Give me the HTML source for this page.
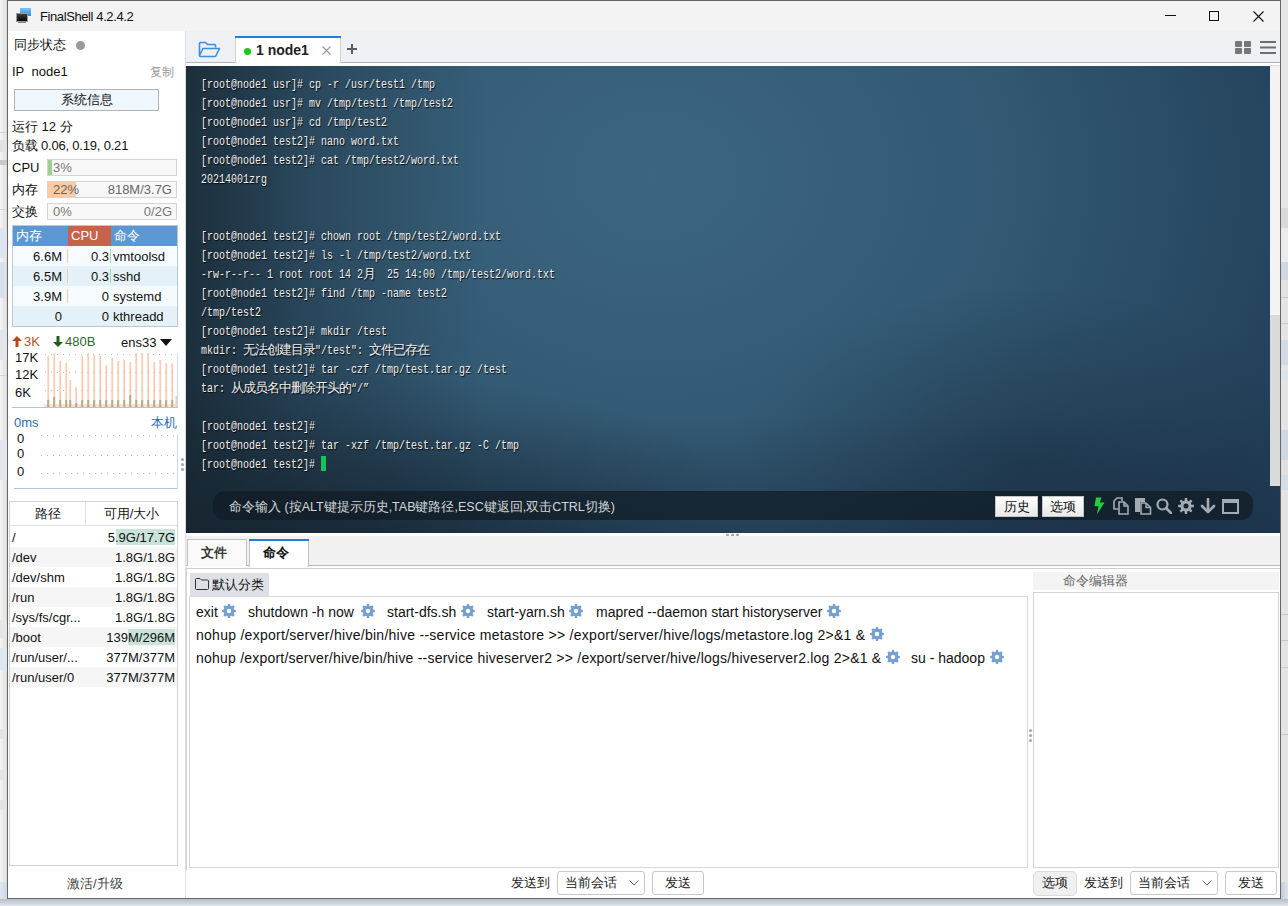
<!DOCTYPE html>
<html><head><meta charset="utf-8">
<style>
*{margin:0;padding:0;box-sizing:border-box}
html,body{width:1288px;height:906px;overflow:hidden;background:#f0f0f0;font-family:"Liberation Sans",sans-serif;font-size:13px;color:#222;position:relative}
.a{position:absolute;white-space:nowrap}
.t{position:absolute;white-space:nowrap;line-height:16px}
.tl{position:absolute;left:201px;font-family:"Liberation Mono",monospace;font-size:13px;transform:scaleX(0.7692);transform-origin:0 0;color:#f2f2f2;text-shadow:1px 1px 1px rgba(0,0,0,0.9);white-space:pre;line-height:18px}
.cj{display:inline-block;vertical-align:top;height:18px}
.cj i{display:inline-block;font-style:normal;font-size:12.5px;letter-spacing:-1px;transform:scaleX(1.3);transform-origin:0 0}
.bar{position:absolute;left:47px;width:130px;height:17px;border:1px solid #d4d4d4;background:#f8f8f8}
.pt{position:absolute;left:12px;width:166px;height:20px;font-size:13px;line-height:20px}
.dk{position:absolute;left:10px;width:168px;height:20px;font-size:13px;line-height:20px;color:#111}
.gear{position:absolute;width:14px;height:14px}
.btn{position:absolute;border:1px solid #c8c8c8;border-radius:3px;background:#fff;text-align:center;font-size:13px;line-height:21px;color:#222}
</style></head><body>
<!-- background strips -->
<div class="a" style="left:0;top:0;width:7px;height:906px;background:linear-gradient(90deg,#f4f4f4,#e8e8e8 60%,#dcdcdc)"></div>
<div class="a" style="left:0;top:132px;width:7px;height:1px;background:#d4d4d4"></div>
<div class="a" style="left:0;top:140px;width:7px;height:12px;background:#e2e2e2"></div>
<div class="a" style="left:0;top:160px;width:7px;height:5px;background:#c9c9c9"></div>
<div class="a" style="left:0;top:209px;width:7px;height:1px;background:#d4d4d4"></div>
<div class="a" style="left:0;top:228px;width:7px;height:30px;background:#dfe5ee"></div>
<div class="a" style="left:0;top:262px;width:7px;height:36px;background:#d8e0ea"></div>
<div class="a" style="left:0;top:330px;width:7px;height:30px;background:#e2e6ec"></div>
<div class="a" style="left:0;top:375px;width:7px;height:1px;background:#d4d4d4"></div>
<div class="a" style="left:0;top:440px;width:7px;height:40px;background:#e3e7ed"></div>
<div class="a" style="left:0;top:620px;width:7px;height:18px;background:#e6e6e6"></div>
<div class="a" style="left:0;top:648px;width:7px;height:22px;background:#e0e6ee"></div>
<div class="a" style="left:0;top:729px;width:7px;height:10px;background:#e4e4e4"></div>
<div class="a" style="left:0;top:770px;width:7px;height:10px;background:#e4e4e4"></div>
<div class="a" style="left:0;top:800px;width:7px;height:10px;background:#e4e4e4"></div>
<div class="a" style="left:0;top:882px;width:7px;height:24px;background:linear-gradient(90deg,#dfe6ee,#cfd7e1)"></div>
<div class="a" style="left:0;top:899px;width:1288px;height:7px;background:linear-gradient(180deg,#b6bec9,#ccd4de 60%,#e6e9ed)"></div>
<div class="a" style="left:1281px;top:0;width:7px;height:898px;background:#e4e4e4"></div>
<div class="a" style="left:1281px;top:0px;width:7px;height:208px;background:#e6e6e6"></div>
<div class="a" style="left:1281px;top:208px;width:7px;height:20px;background:#d9d9d9"></div>
<div class="a" style="left:1281px;top:228px;width:7px;height:34px;background:#ebebeb"></div>
<div class="a" style="left:1281px;top:262px;width:7px;height:18px;background:#cfd7e2"></div>
<div class="a" style="left:1281px;top:280px;width:7px;height:17px;background:#e2e2e2"></div>
<div class="a" style="left:1281px;top:297px;width:7px;height:1px;background:#c8c8c8"></div>
<div class="a" style="left:1281px;top:323px;width:7px;height:1px;background:#c8c8c8"></div>
<div class="a" style="left:1281px;top:340px;width:7px;height:25px;background:#d2dae5"></div>
<div class="a" style="left:1281px;top:370px;width:7px;height:10px;background:#dde3ea"></div>
<div class="a" style="left:1281px;top:430px;width:7px;height:30px;background:#cfd7e2"></div>
<div class="a" style="left:1281px;top:460px;width:7px;height:15px;background:#e0e0e0"></div>
<div class="a" style="left:1281px;top:475px;width:7px;height:15px;background:#d4dce6"></div>
<div class="a" style="left:1281px;top:614px;width:7px;height:1px;background:#c8c8c8"></div>
<div class="a" style="left:1281px;top:640px;width:7px;height:1px;background:#c8c8c8"></div>
<div class="a" style="left:1281px;top:667px;width:7px;height:1px;background:#c8c8c8"></div>
<div class="a" style="left:1281px;top:734px;width:7px;height:1px;background:#c8c8c8"></div>
<div class="a" style="left:1281px;top:800px;width:7px;height:82px;background:#e4e4e4"></div><div class="a" style="left:1281px;top:882px;width:7px;height:17px;background:linear-gradient(90deg,#c4ccd6,#dde3ea)"></div>

<!-- window -->
<div class="a" style="left:7px;top:0;width:1274px;height:899px;border:1px solid #666;background:#fff"></div>
<div class="a" style="left:8px;top:1px;width:1272px;height:30px;background:#f3f3f3"></div>
<svg class="a" style="left:16px;top:7px" width="17" height="17" viewBox="0 0 17 17">
 <defs><linearGradient id="gb" x1="0" y1="0" x2="0" y2="1"><stop offset="0" stop-color="#7cc4f6"/><stop offset="1" stop-color="#2f8be0"/></linearGradient>
 <linearGradient id="gk" x1="0" y1="0" x2="0" y2="1"><stop offset="0" stop-color="#444"/><stop offset="1" stop-color="#000"/></linearGradient></defs>
 <rect x="4" y="1" width="11" height="8" fill="url(#gb)"/>
 <rect x="0.5" y="6.5" width="11" height="8" fill="url(#gk)" stroke="#999" stroke-width="1"/>
 <rect x="2" y="15" width="8" height="1" fill="#888"/>
</svg>
<div class="t" style="left:40px;top:9px;font-size:13px;letter-spacing:-0.4px;color:#111">FinalShell 4.2.4.2</div>
<div class="a" style="left:1165px;top:15px;width:11px;height:1px;background:#111"></div>
<div class="a" style="left:1209px;top:11px;width:10px;height:10px;border:1px solid #111"></div>
<svg class="a" style="left:1253px;top:11px" width="11" height="11" viewBox="0 0 11 11"><path d="M0.5 0.5L10.5 10.5M10.5 0.5L0.5 10.5" stroke="#111" stroke-width="1.1"/></svg>

<!-- LEFT PANEL -->
<div class="a" style="left:185px;top:31px;width:1px;height:867px;background:#dcdcdc"></div>
<div class="t" style="left:14px;top:37px;font-size:13px;color:#111">同步状态</div>
<div class="a" style="left:76px;top:41px;width:9px;height:9px;border-radius:50%;background:#999"></div>
<div class="t" style="left:12px;top:64px;font-size:13px;color:#111">IP&nbsp; node1</div>
<div class="t" style="left:150px;top:64px;font-size:12px;color:#999">复制</div>
<div class="a" style="left:14px;top:89px;width:145px;height:22px;border:1px solid #b4b4b4;background:#eef7fd;text-align:center;font-size:13px;line-height:20px;color:#111">系统信息</div>
<div class="t" style="left:12px;top:119px;color:#111">运行 12 分</div>
<div class="t" style="left:12px;top:138px;color:#111;letter-spacing:-0.2px">负载 0.06, 0.19, 0.21</div>

<div class="t" style="left:12px;top:160px;color:#111">CPU</div>
<div class="bar" style="top:159px"><div class="a" style="left:0;top:0;width:4px;height:15px;background:#9ccf90"></div><div class="t" style="left:5px;top:0;color:#777">3%</div></div>
<div class="t" style="left:12px;top:182px;color:#111">内存</div>
<div class="bar" style="top:181px"><div class="a" style="left:0;top:0;width:28px;height:15px;background:#fccba3"></div><div class="t" style="left:5px;top:0;color:#666">22%</div><div class="t" style="right:4px;top:0;color:#666">818M/3.7G</div></div>
<div class="t" style="left:12px;top:204px;color:#111">交换</div>
<div class="bar" style="top:203px"><div class="t" style="left:5px;top:0;color:#777">0%</div><div class="t" style="right:4px;top:0;color:#777">0/2G</div></div>

<!-- process table -->
<div class="a" style="left:12px;top:225px;width:166px;height:102px;border:1px solid #b8c8d8;background:#f5fbff"></div>
<div class="a" style="left:13px;top:226px;width:164px;height:20px;background:#5c97d3"></div>
<div class="a" style="left:68px;top:226px;width:43px;height:20px;background:#c6634d"></div>
<div class="t" style="left:16px;top:228px;color:#fff">内存</div>
<div class="t" style="left:71px;top:228px;color:#fff">CPU</div>
<div class="t" style="left:114px;top:228px;color:#fff">命令</div>
<div class="a" style="left:13px;top:266px;width:164px;height:20px;background:#e5f1f9"></div>
<div class="a" style="left:13px;top:306px;width:164px;height:20px;background:#e5f1f9"></div>
<div class="a" style="left:67px;top:249px;width:1px;height:14px;background:#f7c9a5"></div>
<div class="a" style="left:67px;top:269px;width:1px;height:14px;background:#f7c9a5"></div>
<div class="a" style="left:67px;top:289px;width:1px;height:14px;background:#f7c9a5"></div>
<div class="a" style="left:110px;top:249px;width:1px;height:14px;background:#a8d8a0"></div>
<div class="a" style="left:110px;top:269px;width:1px;height:14px;background:#a8d8a0"></div>
<div class="t" style="left:12px;width:50px;text-align:right;top:249px;color:#111">6.6M</div>
<div class="t" style="left:60px;width:49px;text-align:right;top:249px;color:#111">0.3</div>
<div class="t" style="left:113px;top:249px;color:#111">vmtoolsd</div>
<div class="t" style="left:12px;width:50px;text-align:right;top:269px;color:#111">6.5M</div>
<div class="t" style="left:60px;width:49px;text-align:right;top:269px;color:#111">0.3</div>
<div class="t" style="left:113px;top:269px;color:#111">sshd</div>
<div class="t" style="left:12px;width:50px;text-align:right;top:289px;color:#111">3.9M</div>
<div class="t" style="left:60px;width:49px;text-align:right;top:289px;color:#111">0</div>
<div class="t" style="left:113px;top:289px;color:#111">systemd</div>
<div class="t" style="left:12px;width:50px;text-align:right;top:309px;color:#111">0</div>
<div class="t" style="left:60px;width:49px;text-align:right;top:309px;color:#111">0</div>
<div class="t" style="left:113px;top:309px;color:#111">kthreadd</div>

<!-- network -->
<svg class="a" style="left:12px;top:336px" width="10" height="11" viewBox="0 0 10 11"><path d="M5 0L10 5H6.5V11H3.5V5H0Z" fill="#b34a18"/></svg>
<div class="t" style="left:24px;top:334px;color:#b5521f">3K</div>
<svg class="a" style="left:53px;top:336px" width="10" height="11" viewBox="0 0 10 11"><path d="M5 11L10 6H6.5V0H3.5V6H0Z" fill="#1d5e1d"/></svg>
<div class="t" style="left:65px;top:334px;color:#2a6a2a">480B</div>
<div class="t" style="left:121px;top:335px;color:#111">ens33</div>
<svg class="a" style="left:160px;top:339px" width="12" height="7" viewBox="0 0 12 7"><path d="M0 0H12L6 7Z" fill="#111"/></svg>
<svg class="a" style="left:0;top:0" width="186" height="500">
 <line x1="45" y1="354.5" x2="177" y2="354.5" stroke="#bbb" stroke-width="1" stroke-dasharray="1 5"/>
 <line x1="45" y1="372.5" x2="177" y2="372.5" stroke="#bbb" stroke-width="1" stroke-dasharray="1 5"/>
 <line x1="45" y1="390.5" x2="177" y2="390.5" stroke="#bbb" stroke-width="1" stroke-dasharray="1 5"/>
 <rect x="44" y="404" width="134" height="3" fill="#fde0d2"/><rect x="47.4" y="356" width="1.7" height="51" fill="#fdc9b1"/><rect x="47.2" y="400" width="2" height="7" fill="#b8ab86"/><rect x="53.4" y="353" width="1.7" height="54" fill="#fdc9b1"/><rect x="53.2" y="397" width="2" height="10" fill="#b8ab86"/><rect x="59.4" y="361" width="1.7" height="46" fill="#fdc9b1"/><rect x="59.2" y="400" width="2" height="7" fill="#b8ab86"/><rect x="65.4" y="363" width="1.7" height="44" fill="#fdc9b1"/><rect x="65.2" y="400" width="2" height="7" fill="#b8ab86"/><rect x="69.4" y="380" width="1.7" height="27" fill="#fdc9b1"/><rect x="69.2" y="400" width="2" height="7" fill="#b8ab86"/><rect x="75.4" y="387" width="1.7" height="20" fill="#fdc9b1"/><rect x="75.2" y="403" width="2" height="4" fill="#b8ab86"/><rect x="81.4" y="356" width="1.7" height="51" fill="#fdc9b1"/><rect x="81.2" y="400" width="2" height="7" fill="#b8ab86"/><rect x="87.4" y="353" width="1.7" height="54" fill="#fdc9b1"/><rect x="87.2" y="400" width="2" height="7" fill="#b8ab86"/><rect x="93.4" y="355" width="1.7" height="52" fill="#fdc9b1"/><rect x="93.2" y="400" width="2" height="7" fill="#b8ab86"/><rect x="99.4" y="356" width="1.7" height="51" fill="#fdc9b1"/><rect x="99.2" y="400" width="2" height="7" fill="#b8ab86"/><rect x="105.4" y="365" width="1.7" height="42" fill="#fdc9b1"/><rect x="105.2" y="400" width="2" height="7" fill="#b8ab86"/><rect x="111.4" y="358" width="1.7" height="49" fill="#fdc9b1"/><rect x="111.2" y="400" width="2" height="7" fill="#b8ab86"/><rect x="117.4" y="361" width="1.7" height="46" fill="#fdc9b1"/><rect x="117.2" y="400" width="2" height="7" fill="#b8ab86"/><rect x="123.4" y="360" width="1.7" height="47" fill="#fdc9b1"/><rect x="123.2" y="400" width="2" height="7" fill="#b8ab86"/><rect x="129.4" y="362" width="1.7" height="45" fill="#fdc9b1"/><rect x="129.2" y="395" width="2" height="12" fill="#b8ab86"/><rect x="135.4" y="353" width="1.7" height="54" fill="#fdc9b1"/><rect x="135.2" y="400" width="2" height="7" fill="#b8ab86"/><rect x="141.4" y="353" width="1.7" height="54" fill="#fdc9b1"/><rect x="141.2" y="400" width="2" height="7" fill="#b8ab86"/><rect x="147.4" y="353" width="1.7" height="54" fill="#fdc9b1"/><rect x="147.2" y="400" width="2" height="7" fill="#b8ab86"/><rect x="153.4" y="362" width="1.7" height="45" fill="#fdc9b1"/><rect x="153.2" y="400" width="2" height="7" fill="#b8ab86"/><rect x="159.4" y="360" width="1.7" height="47" fill="#fdc9b1"/><rect x="159.2" y="400" width="2" height="7" fill="#b8ab86"/><rect x="165.4" y="363" width="1.7" height="44" fill="#fdc9b1"/><rect x="165.2" y="400" width="2" height="7" fill="#b8ab86"/><rect x="171.4" y="363" width="1.7" height="44" fill="#fdc9b1"/><rect x="171.2" y="400" width="2" height="7" fill="#b8ab86"/><rect x="175.4" y="396" width="1.7" height="11" fill="#fdc9b1"/>
 <line x1="12" y1="407.5" x2="178" y2="407.5" stroke="#a9c6dc" stroke-width="1"/>
 <line x1="177.5" y1="353" x2="177.5" y2="408" stroke="#c9dbe8" stroke-width="1"/>
 <line x1="41" y1="435.5" x2="176" y2="435.5" stroke="#bbb" stroke-width="1" stroke-dasharray="1 5"/>
 <line x1="41" y1="455.5" x2="176" y2="455.5" stroke="#bbb" stroke-width="1" stroke-dasharray="1 5"/>
 <line x1="41" y1="473.5" x2="176" y2="473.5" stroke="#bbb" stroke-width="1" stroke-dasharray="1 5"/>
 <line x1="14" y1="488.5" x2="178" y2="488.5" stroke="#a9c6dc" stroke-width="1"/>
 <line x1="177.5" y1="434" x2="177.5" y2="489" stroke="#c9dbe8" stroke-width="1"/>
 <circle cx="182.5" cy="459.5" r="1.6" fill="#aaa"/><circle cx="182.5" cy="464.5" r="1.6" fill="#aaa"/><circle cx="182.5" cy="469.5" r="1.6" fill="#aaa"/>
</svg>
<div class="t" style="left:15px;top:350px;color:#111">17K</div>
<div class="t" style="left:15px;top:367px;color:#111">12K</div>
<div class="t" style="left:15px;top:385px;color:#111">6K</div>
<div class="t" style="left:14px;top:415px;color:#2b6cb4">0ms</div>
<div class="t" style="left:151px;top:415px;color:#2b6cb4">本机</div>
<div class="t" style="left:17px;top:431px;color:#111">0</div>
<div class="t" style="left:17px;top:446px;color:#111">0</div>
<div class="t" style="left:17px;top:464px;color:#111">0</div>

<!-- disk table -->
<div class="a" style="left:9px;top:501px;width:169px;height:365px;border:1px solid #d2d2d2;background:#fff"></div>
<div class="a" style="left:10px;top:525px;width:167px;height:1px;background:#e2e2e2"></div>
<div class="a" style="left:85px;top:502px;width:1px;height:23px;background:#e2e2e2"></div>
<div class="t" style="left:10px;width:75px;text-align:center;top:506px;color:#111">路径</div>
<div class="t" style="left:86px;width:91px;text-align:center;top:506px;color:#111">可用/大小</div>
<div class="a" style="left:10px;top:547px;width:167px;height:20px;background:#f6f6f6"></div>
<div class="a" style="left:10px;top:587px;width:167px;height:20px;background:#f6f6f6"></div>
<div class="a" style="left:10px;top:627px;width:167px;height:20px;background:#f6f6f6"></div>
<div class="a" style="left:10px;top:667px;width:167px;height:20px;background:#f6f6f6"></div>
<div class="a" style="left:116px;top:529px;width:59px;height:16px;background:#c9e3da"></div>
<div class="a" style="left:128px;top:629px;width:47px;height:16px;background:#c9e3da"></div>
<div class="t" style="left:12px;top:530px;color:#111">/</div><div class="t" style="left:90px;width:85px;text-align:right;top:530px;color:#111">5.9G/17.7G</div>
<div class="t" style="left:12px;top:550px;color:#111">/dev</div><div class="t" style="left:90px;width:85px;text-align:right;top:550px;color:#111">1.8G/1.8G</div>
<div class="t" style="left:12px;top:570px;color:#111">/dev/shm</div><div class="t" style="left:90px;width:85px;text-align:right;top:570px;color:#111">1.8G/1.8G</div>
<div class="t" style="left:12px;top:590px;color:#111">/run</div><div class="t" style="left:90px;width:85px;text-align:right;top:590px;color:#111">1.8G/1.8G</div>
<div class="t" style="left:12px;top:610px;color:#111">/sys/fs/cgr...</div><div class="t" style="left:90px;width:85px;text-align:right;top:610px;color:#111">1.8G/1.8G</div>
<div class="t" style="left:12px;top:630px;color:#111">/boot</div><div class="t" style="left:90px;width:85px;text-align:right;top:630px;color:#111">139M/296M</div>
<div class="t" style="left:12px;top:650px;color:#111">/run/user/...</div><div class="t" style="left:90px;width:85px;text-align:right;top:650px;color:#111">377M/377M</div>
<div class="t" style="left:12px;top:670px;color:#111">/run/user/0</div><div class="t" style="left:90px;width:85px;text-align:right;top:670px;color:#111">377M/377M</div>

<div class="t" style="left:67px;top:876px;color:#444">激活/升级</div>

<!-- RIGHT: tab bar -->
<div class="a" style="left:186px;top:31px;width:1094px;height:31px;background:#eef0f4"></div>
<div class="a" style="left:186px;top:62px;width:1094px;height:1px;background:#b4b4b4"></div>
<div class="a" style="left:186px;top:63px;width:1094px;height:3px;background:#fff"></div>
<svg class="a" style="left:198px;top:41px" width="23" height="17" viewBox="0 0 23 17">
 <path d="M1.5 14.5V2.5Q1.5 1.5 2.5 1.5H7.5L9.5 3.5H16.5Q17.5 3.5 17.5 4.5V6.5" fill="none" stroke="#3b8ee0" stroke-width="1.6"/>
 <path d="M1.5 14.5L5 7.5H21.5L18 14.5Q17.6 15.5 16.5 15.5H2.5Q1.5 15.5 1.5 14.5Z" fill="none" stroke="#3b8ee0" stroke-width="1.6" stroke-linejoin="round"/>
</svg>
<div class="a" style="left:235px;top:36px;width:106px;height:27px;background:#fff;border-left:1px solid #d0d0d0;border-right:1px solid #d0d0d0"></div>
<div class="a" style="left:235px;top:36px;width:106px;height:2px;background:#1d7ee0"></div>
<div class="a" style="left:244px;top:48px;width:7px;height:7px;border-radius:50%;background:#1fc41f"></div>
<div class="t" style="left:256px;top:42px;font-size:14px;font-weight:bold;color:#222">1 node1</div>
<svg class="a" style="left:322px;top:46px" width="9" height="9" viewBox="0 0 9 9"><path d="M0.5 0.5L8.5 8.5M8.5 0.5L0.5 8.5" stroke="#999" stroke-width="1.1"/></svg>
<svg class="a" style="left:346px;top:43px" width="12" height="12" viewBox="0 0 12 12"><path d="M6 1V11M1 6H11" stroke="#5c5c5c" stroke-width="2"/></svg>
<svg class="a" style="left:1235px;top:41px" width="16" height="13" viewBox="0 0 16 13">
 <rect x="0" y="0" width="7" height="6" rx="1" fill="#777"/><rect x="9" y="0" width="7" height="6" rx="1" fill="#777"/>
 <rect x="0" y="7" width="7" height="6" rx="1" fill="#777"/><rect x="9" y="7" width="7" height="6" rx="1" fill="#777"/>
</svg>
<svg class="a" style="left:1260px;top:41px" width="16" height="13" viewBox="0 0 16 13">
 <rect x="0" y="0" width="16" height="2" fill="#6d6d6d"/><rect x="0" y="5.5" width="16" height="2" fill="#6d6d6d"/><rect x="0" y="11" width="16" height="2" fill="#6d6d6d"/>
</svg>

<!-- terminal -->
<div class="a" style="left:186px;top:66px;width:1094px;height:467px;overflow:hidden;
 background:
  linear-gradient(90deg, rgba(22,34,42,0.7) 0px, rgba(22,34,42,0.3) 120px, rgba(22,34,42,0) 300px),
  radial-gradient(ellipse 450px 160px at 150px 467px, rgba(18,30,40,0.55), rgba(18,30,40,0) 100%),
  radial-gradient(ellipse 300px 180px at 840px 400px, rgba(16,30,46,0.35), rgba(16,30,46,0) 100%),
  linear-gradient(180deg, rgba(18,32,46,0) 75%, rgba(18,32,46,0.3) 100%),
  radial-gradient(ellipse 680px 540px at 470px 110px, rgba(62,106,132,0.9) 0%, rgba(62,106,132,0.6) 50%, rgba(62,106,132,0) 100%),
  #23405a;"></div>
<div class="a" style="left:1270px;top:65px;width:10px;height:1px;background:#ddd"></div><div class="a" style="left:1270px;top:66px;width:10px;height:420px;background:#f3f3f3"></div>
<div class="a" style="left:1270px;top:315px;width:10px;height:171px;background:#dadada"></div>
<div class="tl" style="top:76px">[root@node1 usr]# cp -r /usr/test1 /tmp</div>
<div class="tl" style="top:95px">[root@node1 usr]# mv /tmp/test1 /tmp/test2</div>
<div class="tl" style="top:114px">[root@node1 usr]# cd /tmp/test2</div>
<div class="tl" style="top:133px">[root@node1 test2]# nano word.txt</div>
<div class="tl" style="top:152px">[root@node1 test2]# cat /tmp/test2/word.txt</div>
<div class="tl" style="top:171px">20214001zrg</div>
<div class="tl" style="top:228px">[root@node1 test2]# chown root /tmp/test2/word.txt</div>
<div class="tl" style="top:247px">[root@node1 test2]# ls -l /tmp/test2/word.txt</div>
<div class="tl" style="top:266px">-rw-r--r-- 1 root root 14 2<span class=cj style="width:15.6px"><i>月</i></span>  25 14:00 /tmp/test2/word.txt</div>
<div class="tl" style="top:285px">[root@node1 test2]# find /tmp -name test2</div>
<div class="tl" style="top:304px">/tmp/test2</div>
<div class="tl" style="top:323px">[root@node1 test2]# mkdir /test</div>
<div class="tl" style="top:342px">mkdir: <span class=cj style="width:93.6px"><i>无法创建目录</i></span>"/test": <span class=cj style="width:78.0px"><i>文件已存在</i></span></div>
<div class="tl" style="top:361px">[root@node1 test2]# tar -czf /tmp/test.tar.gz /test</div>
<div class="tl" style="top:380px">tar: <span class=cj style="width:156.0px"><i>从成员名中删除开头的</i></span>“/”</div>
<div class="tl" style="top:418px">[root@node1 test2]#</div>
<div class="tl" style="top:437px">[root@node1 test2]# tar -xzf /tmp/test.tar.gz -C /tmp</div>
<div class="tl" style="top:456px">[root@node1 test2]# </div>

<div class="a" style="left:321px;top:456px;width:5px;height:15px;background:#17c25a"></div>

<!-- command input bar -->
<div class="a" style="left:213px;top:491px;width:1040px;height:29px;border-radius:12px;background:rgba(16,28,38,0.72)"></div>
<div class="t" style="left:229px;top:499px;font-size:12.5px;color:#d3d7da">命令输入 (按ALT键提示历史,TAB键路径,ESC键返回,双击CTRL切换)</div>
<div class="a" style="left:995px;top:496px;width:43px;height:21px;background:linear-gradient(#fff,#e9e9e9);border:1px solid #c4c4c4;text-align:center;line-height:19px;color:#111">历史</div>
<div class="a" style="left:1042px;top:496px;width:42px;height:21px;background:linear-gradient(#fff,#e9e9e9);border:1px solid #c4c4c4;text-align:center;line-height:19px;color:#111">选项</div>
<svg class="a" style="left:1094px;top:497px" width="12" height="18" viewBox="0 0 12 18"><path d="M2 0.5H7.5L5.8 5.5H10.5L2.8 17.5L4.6 9.2H0.5Z" fill="#22d13a"/></svg>
<svg class="a" style="left:1112px;top:497px" width="18" height="18" viewBox="0 0 18 18" fill="none" stroke="#a3acb4" stroke-width="1.6"><path d="M6 12H2V4L5 1H10V4"/><path d="M7 5H12L16 9V17H7Z"/><path d="M12 5V9H16"/></svg>
<svg class="a" style="left:1134px;top:497px" width="18" height="18" viewBox="0 0 18 18"><path d="M1 1H11V5H6V15H1Z" fill="#a3acb4"/><path d="M7 6H12L16.5 10.5V17H7Z" fill="none" stroke="#a3acb4" stroke-width="1.6"/><path d="M12 6V10.5H16.5" fill="none" stroke="#a3acb4" stroke-width="1.4"/></svg>
<svg class="a" style="left:1156px;top:498px" width="16" height="16" viewBox="0 0 16 16"><circle cx="6.5" cy="6.5" r="5" fill="none" stroke="#a3acb4" stroke-width="2.2"/><path d="M10 10L15 15" stroke="#a3acb4" stroke-width="2.6" stroke-linecap="round"/></svg>
<svg class="a" style="left:1178px;top:498px" width="16" height="16" viewBox="0 0 14 14"><path fill="#a3acb4" fill-rule="evenodd" d="M11.76 5.85 L13.92 5.95 L13.92 8.05 L11.76 8.15 L11.18 9.55 L12.64 11.15 L11.15 12.64 L9.55 11.18 L8.15 11.76 L8.05 13.92 L5.95 13.92 L5.85 11.76 L4.45 11.18 L2.85 12.64 L1.36 11.15 L2.82 9.55 L2.24 8.15 L0.08 8.05 L0.08 5.95 L2.24 5.85 L2.82 4.45 L1.36 2.85 L2.85 1.36 L4.45 2.82 L5.85 2.24 L5.95 0.08 L8.05 0.08 L8.15 2.24 L9.55 2.82 L11.15 1.36 L12.64 2.85 L11.18 4.45Z M9.2 7 A2.2 2.2 0 1 0 4.8 7 A2.2 2.2 0 1 0 9.2 7Z"/></svg>
<svg class="a" style="left:1200px;top:498px" width="16" height="16" viewBox="0 0 16 16"><path d="M8 1V14M2 8L8 14L14 8" fill="none" stroke="#a3acb4" stroke-width="2.6" stroke-linecap="round" stroke-linejoin="round"/></svg>
<svg class="a" style="left:1222px;top:499px" width="17" height="15" viewBox="0 0 17 15"><rect x="1" y="1" width="15" height="13" fill="none" stroke="#a3acb4" stroke-width="2"/><rect x="1" y="1" width="15" height="3" fill="#a3acb4"/></svg>


<!-- splitter -->
<div class="a" style="left:186px;top:533px;width:1094px;height:3px;background:#fff"></div>
<svg class="a" style="left:725px;top:533px" width="15" height="4"><circle cx="2.5" cy="2" r="1.6" fill="#aaa"/><circle cx="7.5" cy="2" r="1.6" fill="#aaa"/><circle cx="12.5" cy="2" r="1.6" fill="#aaa"/></svg>
<div class="a" style="left:186px;top:536px;width:1094px;height:29px;background:#f1f1f1"></div>
<div class="a" style="left:186px;top:565px;width:1094px;height:1px;background:#b8b8b8"></div>
<div class="a" style="left:186px;top:566px;width:1094px;height:2px;background:#fff"></div>
<div class="a" style="left:186px;top:568px;width:1094px;height:1px;background:#cfcfcf"></div>
<div class="a" style="left:187px;top:539px;width:60px;height:27px;background:#fafafa;border:1px solid #c0c0c0;border-bottom:none"></div>
<div class="t" style="left:201px;top:545px;font-size:13px;font-weight:bold;color:#3a3a3a">文件</div>
<div class="a" style="left:249px;top:539px;width:60px;height:28px;background:#fff;border-left:1px solid #c0c0c0;border-right:1px solid #c0c0c0"></div>
<div class="a" style="left:249px;top:539px;width:60px;height:2px;background:#1d7ee0"></div>
<div class="t" style="left:263px;top:545px;font-size:13px;font-weight:bold;color:#111">命令</div>

<!-- commands panel -->
<div class="a" style="left:186px;top:569px;width:1px;height:301px;background:#d4d4d4"></div>
<div class="a" style="left:190px;top:573px;width:79px;height:23px;background:#dde1e6"></div>
<svg class="a" style="left:195px;top:578px" width="14" height="12" viewBox="0 0 14 12"><path d="M0.5 1.5Q0.5 0.5 1.5 0.5H5L6.5 2H12.5Q13.5 2 13.5 3V10.5Q13.5 11.5 12.5 11.5H1.5Q0.5 11.5 0.5 10.5Z" fill="none" stroke="#333" stroke-width="1"/></svg>
<div class="t" style="left:212px;top:577px;color:#111">默认分类</div>
<div class="a" style="left:189px;top:596px;width:839px;height:272px;border:1px solid #d8d8d8;background:#fff"></div>
<div class="t" style="left:196px;top:604px;color:#111;font-size:14px">exit</div><svg class="gear" style="left:222px;top:604px" viewBox="0 0 14 14"><path fill="#74a0d0" fill-rule="evenodd" d="M12.35 5.71 L13.92 5.95 L13.92 8.05 L12.35 8.29 L11.70 9.86 L12.64 11.15 L11.15 12.64 L9.86 11.70 L8.29 12.35 L8.05 13.92 L5.95 13.92 L5.71 12.35 L4.14 11.70 L2.85 12.64 L1.36 11.15 L2.30 9.86 L1.65 8.29 L0.08 8.05 L0.08 5.95 L1.65 5.71 L2.30 4.14 L1.36 2.85 L2.85 1.36 L4.14 2.30 L5.71 1.65 L5.95 0.08 L8.05 0.08 L8.29 1.65 L9.86 2.30 L11.15 1.36 L12.64 2.85 L11.70 4.14Z M9.2 7 A2.2 2.2 0 1 0 4.8 7 A2.2 2.2 0 1 0 9.2 7Z"/></svg>
<div class="t" style="left:248px;top:604px;color:#111;font-size:14px">shutdown -h now</div><svg class="gear" style="left:361px;top:604px" viewBox="0 0 14 14"><path fill="#74a0d0" fill-rule="evenodd" d="M12.35 5.71 L13.92 5.95 L13.92 8.05 L12.35 8.29 L11.70 9.86 L12.64 11.15 L11.15 12.64 L9.86 11.70 L8.29 12.35 L8.05 13.92 L5.95 13.92 L5.71 12.35 L4.14 11.70 L2.85 12.64 L1.36 11.15 L2.30 9.86 L1.65 8.29 L0.08 8.05 L0.08 5.95 L1.65 5.71 L2.30 4.14 L1.36 2.85 L2.85 1.36 L4.14 2.30 L5.71 1.65 L5.95 0.08 L8.05 0.08 L8.29 1.65 L9.86 2.30 L11.15 1.36 L12.64 2.85 L11.70 4.14Z M9.2 7 A2.2 2.2 0 1 0 4.8 7 A2.2 2.2 0 1 0 9.2 7Z"/></svg>
<div class="t" style="left:387px;top:604px;color:#111;font-size:14px">start-dfs.sh</div><svg class="gear" style="left:461px;top:604px" viewBox="0 0 14 14"><path fill="#74a0d0" fill-rule="evenodd" d="M12.35 5.71 L13.92 5.95 L13.92 8.05 L12.35 8.29 L11.70 9.86 L12.64 11.15 L11.15 12.64 L9.86 11.70 L8.29 12.35 L8.05 13.92 L5.95 13.92 L5.71 12.35 L4.14 11.70 L2.85 12.64 L1.36 11.15 L2.30 9.86 L1.65 8.29 L0.08 8.05 L0.08 5.95 L1.65 5.71 L2.30 4.14 L1.36 2.85 L2.85 1.36 L4.14 2.30 L5.71 1.65 L5.95 0.08 L8.05 0.08 L8.29 1.65 L9.86 2.30 L11.15 1.36 L12.64 2.85 L11.70 4.14Z M9.2 7 A2.2 2.2 0 1 0 4.8 7 A2.2 2.2 0 1 0 9.2 7Z"/></svg>
<div class="t" style="left:487px;top:604px;color:#111;font-size:14px">start-yarn.sh</div><svg class="gear" style="left:569px;top:604px" viewBox="0 0 14 14"><path fill="#74a0d0" fill-rule="evenodd" d="M12.35 5.71 L13.92 5.95 L13.92 8.05 L12.35 8.29 L11.70 9.86 L12.64 11.15 L11.15 12.64 L9.86 11.70 L8.29 12.35 L8.05 13.92 L5.95 13.92 L5.71 12.35 L4.14 11.70 L2.85 12.64 L1.36 11.15 L2.30 9.86 L1.65 8.29 L0.08 8.05 L0.08 5.95 L1.65 5.71 L2.30 4.14 L1.36 2.85 L2.85 1.36 L4.14 2.30 L5.71 1.65 L5.95 0.08 L8.05 0.08 L8.29 1.65 L9.86 2.30 L11.15 1.36 L12.64 2.85 L11.70 4.14Z M9.2 7 A2.2 2.2 0 1 0 4.8 7 A2.2 2.2 0 1 0 9.2 7Z"/></svg>
<div class="t" style="left:596px;top:604px;color:#111;font-size:14px">mapred --daemon start historyserver</div><svg class="gear" style="left:827px;top:604px" viewBox="0 0 14 14"><path fill="#74a0d0" fill-rule="evenodd" d="M12.35 5.71 L13.92 5.95 L13.92 8.05 L12.35 8.29 L11.70 9.86 L12.64 11.15 L11.15 12.64 L9.86 11.70 L8.29 12.35 L8.05 13.92 L5.95 13.92 L5.71 12.35 L4.14 11.70 L2.85 12.64 L1.36 11.15 L2.30 9.86 L1.65 8.29 L0.08 8.05 L0.08 5.95 L1.65 5.71 L2.30 4.14 L1.36 2.85 L2.85 1.36 L4.14 2.30 L5.71 1.65 L5.95 0.08 L8.05 0.08 L8.29 1.65 L9.86 2.30 L11.15 1.36 L12.64 2.85 L11.70 4.14Z M9.2 7 A2.2 2.2 0 1 0 4.8 7 A2.2 2.2 0 1 0 9.2 7Z"/></svg>
<div class="t" style="left:196px;top:627px;color:#111;font-size:14px;letter-spacing:0.27px">nohup /export/server/hive/bin/hive --service metastore &gt;&gt; /export/server/hive/logs/metastore.log 2&gt;&amp;1 &amp;</div><svg class="gear" style="left:870px;top:627px" viewBox="0 0 14 14"><path fill="#74a0d0" fill-rule="evenodd" d="M12.35 5.71 L13.92 5.95 L13.92 8.05 L12.35 8.29 L11.70 9.86 L12.64 11.15 L11.15 12.64 L9.86 11.70 L8.29 12.35 L8.05 13.92 L5.95 13.92 L5.71 12.35 L4.14 11.70 L2.85 12.64 L1.36 11.15 L2.30 9.86 L1.65 8.29 L0.08 8.05 L0.08 5.95 L1.65 5.71 L2.30 4.14 L1.36 2.85 L2.85 1.36 L4.14 2.30 L5.71 1.65 L5.95 0.08 L8.05 0.08 L8.29 1.65 L9.86 2.30 L11.15 1.36 L12.64 2.85 L11.70 4.14Z M9.2 7 A2.2 2.2 0 1 0 4.8 7 A2.2 2.2 0 1 0 9.2 7Z"/></svg>
<div class="t" style="left:196px;top:650px;color:#111;font-size:14px;letter-spacing:0.22px">nohup /export/server/hive/bin/hive --service hiveserver2 &gt;&gt; /export/server/hive/logs/hiveserver2.log 2&gt;&amp;1 &amp;</div><svg class="gear" style="left:886px;top:650px" viewBox="0 0 14 14"><path fill="#74a0d0" fill-rule="evenodd" d="M12.35 5.71 L13.92 5.95 L13.92 8.05 L12.35 8.29 L11.70 9.86 L12.64 11.15 L11.15 12.64 L9.86 11.70 L8.29 12.35 L8.05 13.92 L5.95 13.92 L5.71 12.35 L4.14 11.70 L2.85 12.64 L1.36 11.15 L2.30 9.86 L1.65 8.29 L0.08 8.05 L0.08 5.95 L1.65 5.71 L2.30 4.14 L1.36 2.85 L2.85 1.36 L4.14 2.30 L5.71 1.65 L5.95 0.08 L8.05 0.08 L8.29 1.65 L9.86 2.30 L11.15 1.36 L12.64 2.85 L11.70 4.14Z M9.2 7 A2.2 2.2 0 1 0 4.8 7 A2.2 2.2 0 1 0 9.2 7Z"/></svg>
<div class="t" style="left:911px;top:650px;color:#111;font-size:14px">su - hadoop</div><svg class="gear" style="left:990px;top:650px" viewBox="0 0 14 14"><path fill="#74a0d0" fill-rule="evenodd" d="M12.35 5.71 L13.92 5.95 L13.92 8.05 L12.35 8.29 L11.70 9.86 L12.64 11.15 L11.15 12.64 L9.86 11.70 L8.29 12.35 L8.05 13.92 L5.95 13.92 L5.71 12.35 L4.14 11.70 L2.85 12.64 L1.36 11.15 L2.30 9.86 L1.65 8.29 L0.08 8.05 L0.08 5.95 L1.65 5.71 L2.30 4.14 L1.36 2.85 L2.85 1.36 L4.14 2.30 L5.71 1.65 L5.95 0.08 L8.05 0.08 L8.29 1.65 L9.86 2.30 L11.15 1.36 L12.64 2.85 L11.70 4.14Z M9.2 7 A2.2 2.2 0 1 0 4.8 7 A2.2 2.2 0 1 0 9.2 7Z"/></svg>

<!-- vertical splitter -->
<svg class="a" style="left:1028px;top:728px" width="5" height="15"><circle cx="2.5" cy="2.5" r="1.6" fill="#aaa"/><circle cx="2.5" cy="7.5" r="1.6" fill="#aaa"/><circle cx="2.5" cy="12.5" r="1.6" fill="#aaa"/></svg>
<div class="a" style="left:1033px;top:572px;width:246px;height:18px;background:#f4f4f4"></div>
<div class="t" style="left:1063px;top:573px;color:#666">命令编辑器</div>
<div class="a" style="left:1033px;top:592px;width:246px;height:276px;border:1px solid #d2d2d2;background:#fff"></div>

<!-- bottom bar -->
<div class="t" style="left:511px;top:875px;color:#222">发送到</div>
<div class="btn" style="left:557px;top:871px;width:88px;height:24px;text-align:left;padding-left:7px">当前会话</div>
<svg class="a" style="left:629px;top:880px" width="10" height="6" viewBox="0 0 10 6"><path d="M0.5 0.5L5 5L9.5 0.5" fill="none" stroke="#666" stroke-width="1"/></svg>
<div class="btn" style="left:652px;top:871px;width:52px;height:24px">发送</div>
<div class="btn" style="left:1033px;top:871px;width:44px;height:25px;background:#f0f0f0;border-color:#dcdcdc;border-radius:5px">选项</div>
<div class="t" style="left:1084px;top:875px;color:#222">发送到</div>
<div class="btn" style="left:1130px;top:871px;width:88px;height:24px;text-align:left;padding-left:7px">当前会话</div>
<svg class="a" style="left:1202px;top:880px" width="10" height="6" viewBox="0 0 10 6"><path d="M0.5 0.5L5 5L9.5 0.5" fill="none" stroke="#666" stroke-width="1"/></svg>
<div class="btn" style="left:1225px;top:871px;width:52px;height:24px">发送</div>
</body></html>
